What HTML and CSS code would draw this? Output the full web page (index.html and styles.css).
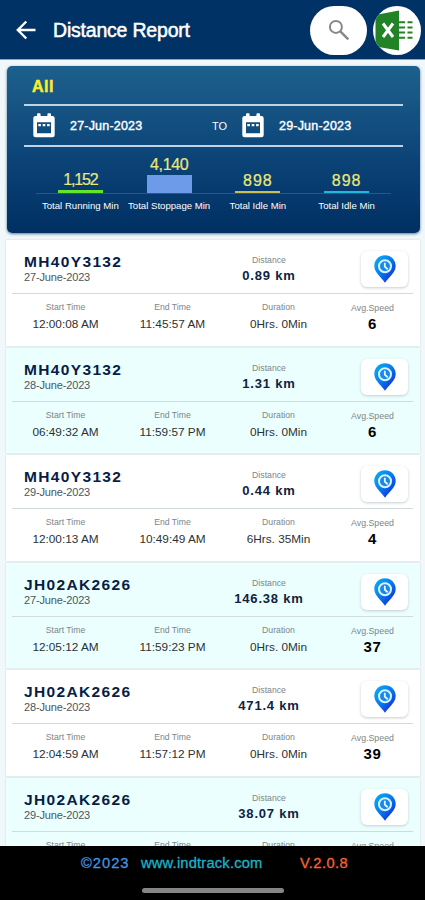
FILE: index.html
```html
<!DOCTYPE html>
<html lang="en">
<head>
  <meta charset="UTF-8" />
  <meta name="viewport" content="width=device-width, initial-scale=1" />
  <title>Distance Report</title>
  <link rel="stylesheet" href="styles.css">
</head>
<body>
  <svg class="defs" width="0" height="0">
    <defs>
      <linearGradient id="pin-fill" x1="0" y1="0" x2="1" y2="1">
        <stop offset="0" stop-color="#08b4f4" />
        <stop offset="0.5" stop-color="#0878ee" />
        <stop offset="1" stop-color="#1212d8" />
      </linearGradient>
      <symbol id="calendar" viewBox="0 0 22 25">
        <path d="M2.5 3H4V1.2a1 1 0 0 1 1-1h1.6a1 1 0 0 1 1 1V3h6.8V1.2a1 1 0 0 1 1-1H17a1 1 0 0 1 1 1V3h1.5A2.2 2.2 0 0 1 21.700 5.200V22a2.200 2.200 0 0 1-2.200 2.200h-17A2.200 2.200 0 0 1 .3 22V5.200A2.200 2.200 0 0 1 2.500 3zM4 9.300v11h14v-11zM5.300 10.900h2.600v2.400H5.300zm4.400 0h2.600v2.400H9.700zm4.400 0h2.600v2.400h-2.600z" fill="#fff" fill-rule="evenodd" />
      </symbol>
      <symbol id="pin" viewBox="0 0 22 28">
        <path d="M11 .3C5 .3.300 5 .300 10.800c0 6.700 6.500 11 10.700 16.900 4.200-5.900 10.700-10.200 10.700-16.900C21.700 5 17 .3 11 .3z" fill="url(#pin-fill)" />
        <circle cx="11" cy="11.300" r="6" fill="#1688ee" stroke="#d8f5ff" stroke-width="2" />
        <path d="M10.800 7.800v3.900l2.900 2.500" fill="none" stroke="#e8faff" stroke-width="1.800" />
      </symbol>
    </defs>
  </svg>

  <header class="topbar">
    <svg class="back" viewBox="0 0 20 20"><path d="M19.500 10H2M10.300 1.500L1.800 10l8.500 8.500" fill="none" stroke="#fff" stroke-width="2.400" /></svg>
    <h1 class="title">Distance Report</h1>
    <div class="search-btn">
      <svg width="22" height="22" viewBox="0 0 22 22" fill="none" stroke="#888"><circle cx="7.900" cy="7.900" r="6" stroke-width="2" /><path d="M12.300 12.300l8 8" stroke-width="2.500" /></svg>
    </div>
    <div class="excel-btn">
      <svg width="48" height="49" viewBox="0 0 48 49">
        <path d="M2.500 9L26 4.500v40L2.500 40.500z" fill="#218326" />
        <path d="M10 17.500l10 13.500M20 17.500l-10 13.500" stroke="#fff" stroke-width="3" />
        <path d="M26 16.200h6M26 21.400h6M26 26.600h6M26 31.800h6M34.500 16.200H39.500M34.500 21.400H39.500M34.500 26.600H39.500M34.500 31.800H39.500" stroke="#218326" stroke-width="2" />
      </svg>
    </div>
  </header>

  <main class="content">
    <section class="summary">
      <div class="vehicle">All</div>
      <div class="dates">
        <svg class="cal"><use href="#calendar" /></svg>
        <span class="date from">27-Jun-2023</span>
        <span class="to">TO</span>
        <svg class="cal"><use href="#calendar" /></svg>
        <span class="date">29-Jun-2023</span>
      </div>
      <div class="chart">
        <div class="col"><span class="num tight">1,152</span><i class="bar green"></i></div>
        <div class="col"><span class="num">4,140</span><i class="bar blue"></i></div>
        <div class="col"><span class="num wide">898</span><i class="bar yellow"></i></div>
        <div class="col"><span class="num wide">898</span><i class="bar cyan"></i></div>
      </div>
      <div class="chart-labels">
        <span>Total Running Min</span>
        <span>Total Stoppage Min</span>
        <span>Total Idle Min</span>
        <span>Total Idle Min</span>
      </div>
    </section>

    <section class="list" id="list"></section>
  </main>

  <footer class="footer">
    <div class="credits">
      <span class="copy">©2023</span>
      <span class="site">www.indtrack.com</span>
      <span class="version">V.2.0.8</span>
    </div>
    <div class="home-bar"></div>
  </footer>

  <script>
    const trips = [
      ["MH40Y3132", "27-June-2023", "0.89 km", "12:00:08 AM", "11:45:57 AM", "0Hrs. 0Min", 6],
      ["MH40Y3132", "28-June-2023", "1.31 km", "06:49:32 AM", "11:59:57 PM", "0Hrs. 0Min", 6],
      ["MH40Y3132", "29-June-2023", "0.44 km", "12:00:13 AM", "10:49:49 AM", "6Hrs. 35Min", 4],
      ["JH02AK2626", "27-June-2023", "146.38 km", "12:05:12 AM", "11:59:23 PM", "0Hrs. 0Min", 37],
      ["JH02AK2626", "28-June-2023", "471.4 km", "12:04:59 AM", "11:57:12 PM", "0Hrs. 0Min", 39],
      ["JH02AK2626", "29-June-2023", "38.07 km", "", "", "", ""]
    ];

    document.getElementById("list").innerHTML = trips.map(([name, date, km, start, end, duration, speed]) => `
      <article class="trip">
        <div class="trip-top">
          <div class="who"><div class="name">${name}</div><div class="day">${date}</div></div>
          <div class="distance"><div class="label">Distance</div><div class="km">${km}</div></div>
          <div class="map-btn"><svg width="22" height="28"><use href="#pin" /></svg></div>
        </div>
        <div class="trip-bottom">
          <div class="cell"><div class="label">Start Time</div><div class="value">${start}</div></div>
          <div class="cell"><div class="label">End Time</div><div class="value">${end}</div></div>
          <div class="cell duration"><div class="label">Duration</div><div class="value">${duration}</div></div>
          <div class="cell speed"><div class="label">Avg.Speed</div><div class="value">${speed}</div></div>
        </div>
      </article>`).join("");
  </script>
</body>
</html>
```
FILE: styles.css
```css
* {
  box-sizing: border-box;
}

html, body {
  margin: 0;
  height: 100%;
  overflow: hidden;
}

body {
  display: flex;
  flex-direction: column;
  background: #f1f8fb;
  font-family: "Liberation Sans", Arial, sans-serif;
  white-space: nowrap;
}

.defs {
  position: absolute;
}

.topbar {
  display: flex;
  align-items: center;
  flex: 0 0 60px;
  padding: 1px 4px 0 16px;
  background: #003265;
  border-bottom: 1px solid #8ba5c2;
}

.back {
  width: 20px;
  height: 20px;
}

.title {
  margin: 0 auto 0 17px;
  color: #fff;
  font-size: 19.5px;
  font-weight: normal;
  letter-spacing: -0.2px;
  -webkit-text-stroke: 0.5px #fff;
}

.search-btn, .excel-btn {
  display: flex;
  align-items: center;
  justify-content: center;
  height: 49px;
  background: #fff;
  overflow: hidden;
}

.search-btn {
  width: 57px;
  border-radius: 25px;
  margin-right: 6px;
}

.excel-btn {
  width: 48px;
  border-radius: 50%;
}

.content {
  flex: 1;
  min-height: 0;
  overflow: hidden;
  padding: 6px 5px 0 6px;
}

.summary {
  height: 167px;
  margin: 0 0 7px 1px;
  padding: 0 17px;
  border-radius: 5px;
  background: linear-gradient(#1d608c, #0c4478 55%, #002f63);
  box-shadow: 0 1px 3px #5c7896;
  color: #fff;
}

.vehicle {
  height: 38px;
  padding: 12px 0 0 8px;
  color: #fbec2c;
  font-size: 16px;
  line-height: 18px;
  font-weight: bold;
  letter-spacing: 0.5px;
  -webkit-text-stroke: 0.5px #fbec2c;
}

.dates {
  display: flex;
  align-items: center;
  height: 43px;
  padding-left: 9px;
  border: solid #c0d2e3;
  border-width: 2px 0;
}

.cal {
  width: 22px;
  height: 25px;
}

.date {
  margin-left: 15px;
  font-size: 12.5px;
  letter-spacing: 0.2px;
  -webkit-text-stroke: 0.4px #fff;
}

.from {
  width: 142px;
}

.to {
  width: 30px;
  font-size: 11px;
}

.chart {
  display: flex;
  height: 47px;
  margin: 0 12px;
  border-bottom: 1px solid #2f5580;
}

.col {
  flex: 1;
  display: flex;
  flex-direction: column;
  align-items: center;
  justify-content: flex-end;
}

.num {
  color: #ece879;
  font-size: 16px;
  line-height: 20px;
  letter-spacing: -0.4px;
  -webkit-text-stroke: 0.2px #ece879;
}

.num.tight {
  letter-spacing: -1.2px;
}

.num.wide {
  letter-spacing: 1px;
}

.bar {
  width: 45px;
  height: 2px;
}

.green {
  height: 3px;
  background: #63e52c;
}

.blue {
  height: 18px;
  background: #6d9bea;
}

.yellow {
  background: #c9bd55;
}

.cyan {
  background: #20b9dc;
}

.chart-labels {
  display: flex;
  margin: 6px 12px 0;
}

.chart-labels span {
  flex: 1 1 0;
  min-width: 0;
  text-align: center;
  font-size: 9.6px;
  line-height: 12px;
}

.trip {
  height: 105.5px;
  margin-bottom: 2px;
  background: #fff;
  box-shadow: 0 0 2px #cbdadd;
}

.trip:nth-child(even) {
  background: #ebffff;
}

.trip-top {
  display: flex;
  height: 54px;
  margin: 0 7px 0 6px;
  border-bottom: 1px solid #d2dada;
}

.who {
  width: 205px;
  padding: 12px 0 0 12px;
}

.name {
  color: #071d46;
  font-size: 15.5px;
  line-height: 19px;
  font-weight: bold;
  letter-spacing: 1.35px;
}

.day {
  color: #4c565c;
  font-size: 11px;
  line-height: 13px;
  letter-spacing: -0.15px;
}

.distance {
  width: 104px;
  padding-top: 14px;
  text-align: center;
}

.label {
  color: #7d8587;
  font-size: 8.7px;
  line-height: 12px;
}

.km {
  color: #10223e;
  font-size: 13px;
  line-height: 20px;
  font-weight: bold;
  letter-spacing: 0.8px;
}

.map-btn {
  display: flex;
  align-items: center;
  justify-content: center;
  width: 47px;
  height: 36px;
  margin: 11px 0 0 40px;
  background: #fff;
  border-radius: 6px;
  box-shadow: 0 1px 3px #c6cccf;
}

.trip-bottom {
  display: flex;
  padding: 7px 0 0 6px;
}

.cell {
  width: 107px;
  text-align: center;
}

.duration {
  width: 105px;
}

.value {
  color: #2b3136;
  font-size: 11.8px;
  line-height: 22px;
}

.speed {
  width: 83px;
  padding-top: 1px;
}

.speed .label {
  font-size: 8.8px;
}

.speed .value {
  color: #000;
  font-size: 15px;
  font-weight: bold;
  letter-spacing: 0.7px;
  line-height: 20px;
}

.footer {
  flex: 0 0 54px;
  background: #000;
}

.credits {
  display: flex;
  height: 42px;
  padding: 8px 0 0 81px;
  font-size: 14.7px;
  line-height: 19px;
  letter-spacing: 0.2px;
}

.copy {
  width: 60px;
  color: #4294e4;
  letter-spacing: 1px;
  -webkit-text-stroke: 0.3px #4294e4;
}

.site {
  width: 159px;
  color: #1ab4c9;
  -webkit-text-stroke: 0.3px #1ab4c9;
}

.version {
  color: #f76432;
  letter-spacing: 0.4px;
  -webkit-text-stroke: 0.3px #f76432;
}

.home-bar {
  width: 142px;
  height: 5px;
  margin: 0 auto;
  border-radius: 3px;
  background: #858585;
}
```
